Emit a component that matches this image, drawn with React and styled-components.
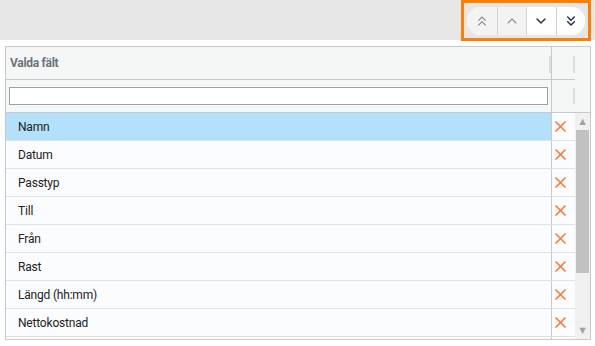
import React from 'react'
import styled, { createGlobalStyle } from 'styled-components';
import { ChevronsUp, ChevronUp, ChevronDown, ChevronsDown } from 'lucide-react';

const GlobalStyle = createGlobalStyle`
    html, body {
        margin: 0;
        padding: 0;
        background: #fff;
        font-family: Roboto, "Liberation Sans", sans-serif;
    }
`;

const fields = ['Namn', 'Datum', 'Passtyp', 'Till', 'Från', 'Rast', 'Längd (hh:mm)', 'Nettokostnad'];

const RemoveIcon = () => (
  <svg width="11" height="11" viewBox="0 0 11 11">
    <path d="M1 1 L10 10 M10 1 L1 10" stroke="currentColor" strokeWidth="1.7" strokeLinecap="round" />
  </svg>
)

const App = () => {
  return (
    <Page>
      <GlobalStyle />
      <Toolbar>
        <Highlight>
          <ButtonGroup>
            <MoveButton disabled><ChevronsUp size={16} strokeWidth={1.7} /></MoveButton>
            <MoveButton disabled><ChevronUp size={16} strokeWidth={1.7} /></MoveButton>
            <MoveButton><ChevronDown size={16} strokeWidth={2} /></MoveButton>
            <MoveButton><ChevronsDown size={16} strokeWidth={2} /></MoveButton>
          </ButtonGroup>
        </Highlight>
      </Toolbar>
      <Content>
        <Table>
          <Header>
            <HeaderCell>Valda fält</HeaderCell>
            <HeaderSide />
            <HeaderEnd />
            <FilterCell><FilterInput type="text" /></FilterCell>
            <FilterSide />
          </Header>
          <Body>
            <List>
              {fields.map((f, i) => (
                <Row key={f} selected={i === 0}>
                  <NameCell>{f}</NameCell>
                  <DeleteCell><RemoveIcon /></DeleteCell>
                </Row>
              ))}
              <Row>
                <NameCell />
                <DeleteCell />
              </Row>
            </List>
            <Scrollbar>
              <Arrow>▲</Arrow>
              <Track><Thumb /></Track>
              <Arrow>▼</Arrow>
            </Scrollbar>
          </Body>
        </Table>
      </Content>
    </Page>
  )
}

export default App;

const Page = styled.div`
    width: 595px;
    height: 346px;
    overflow: hidden;
`;

const Toolbar = styled.div`
    height: 40px;
    background: #e6e6e6;
    display: flex;
    justify-content: flex-end;
    padding-right: 4px;
`;

const Highlight = styled.div`
    width: 130px;
    height: 41px;
    box-sizing: border-box;
    border: 3px solid #ff8000;
    display: flex;
    align-items: center;
    padding-left: 3px;
`;

const ButtonGroup = styled.div`
    display: flex;
    height: 28px;
    border-radius: 14px;
    overflow: hidden;
    background: #fff;
`;

const MoveButton = styled.button`
    width: 29.5px;
    height: 28px;
    border: none;
    padding: 0;
    margin: 0;
    display: flex;
    align-items: center;
    justify-content: center;
    background: ${p => p.disabled ? '#f3f3f3' : '#fff'};
    color: ${p => p.disabled ? '#8d8d8d' : '#1e2a46'};
    & + & {
        border-left: 1px solid #d4d4d4;
    }
`;

const Content = styled.div`
    padding: 6px 4px 0 5px;
`;

const Table = styled.div`
    height: 294px;
    box-sizing: border-box;
    border: 1px solid #c7cacc;
    overflow: hidden;
    display: flex;
    flex-direction: column;
`;

const Header = styled.div`
    display: grid;
    grid-template-columns: 1fr 23px 15px;
    grid-template-rows: 33px 32px;
    background: #f5f6f6;
    border-bottom: 1px solid #c7cacc;
`;

const HeaderCell = styled.div`
    display: flex;
    align-items: center;
    padding-left: 4px;
    font-size: 12px;
    font-weight: 700;
    color: #6b737b;
    letter-spacing: -0.3px;
    border-bottom: 1px solid #c7cacc;
    border-right: 1px solid #c7cacc;
    position: relative;
    &::after {
        content: '';
        position: absolute;
        right: 0;
        top: 9px;
        width: 2px;
        height: 17px;
        background: #dcdcdc;
    }
`;

const HeaderSide = styled.div`
    border-bottom: 1px solid #c7cacc;
    position: relative;
    &::after {
        content: '';
        position: absolute;
        right: 0;
        top: 9px;
        width: 2px;
        height: 17px;
        background: #dcdcdc;
    }
`;

const HeaderEnd = styled.div`
    grid-row: span 2;
`;

const FilterCell = styled.div`
    display: flex;
    align-items: center;
    padding: 0 3px 0 3px;
    border-right: 1px solid #c7cacc;
`;

const FilterSide = styled.div`
    position: relative;
    &::after {
        content: '';
        position: absolute;
        right: 0;
        top: 8px;
        width: 2px;
        height: 16px;
        background: #dcdcdc;
    }
`;

const FilterInput = styled.input`
    width: 100%;
    height: 18px;
    box-sizing: border-box;
    border: 1px solid #98a3a3;
    padding: 0 4px;
    margin: 0;
    background: #fff;
    outline: none;
`;

const Body = styled.div`
    flex: 1;
    display: flex;
    min-height: 0;
`;

const List = styled.div`
    flex: 1;
    overflow: hidden;
    background: #fbfcfe;
`;

const Row = styled.div`
    display: grid;
    grid-template-columns: 1fr 23px;
    height: 28px;
    box-sizing: border-box;
    border-bottom: 1px solid #dde2e8;
    background: ${p => p.selected ? '#b3e0fb' : '#fbfcfe'};
`;

const NameCell = styled.div`
    display: flex;
    align-items: center;
    padding-left: 12px;
    font-size: 12px;
    color: #222;
    letter-spacing: -0.2px;
    border-right: 1px solid #c7cacc;
`;

const DeleteCell = styled.div`
    display: flex;
    align-items: center;
    padding-left: 3px;
    color: #f47c3c;
    background: #fbfcfe;
`;

const Scrollbar = styled.div`
    width: 15px;
    background: #f0f0f0;
    display: flex;
    flex-direction: column;
`;

const Arrow = styled.div`
    height: 17px;
    display: flex;
    align-items: center;
    justify-content: center;
    font-size: 8px;
    color: #a0a0a0;
    font-family: "DejaVu Sans", sans-serif;
`;

const Track = styled.div`
    flex: 1;
    padding: 0 1px;
`;

const Thumb = styled.div`
    height: 143px;
    background: #c1c1c1;
`;
